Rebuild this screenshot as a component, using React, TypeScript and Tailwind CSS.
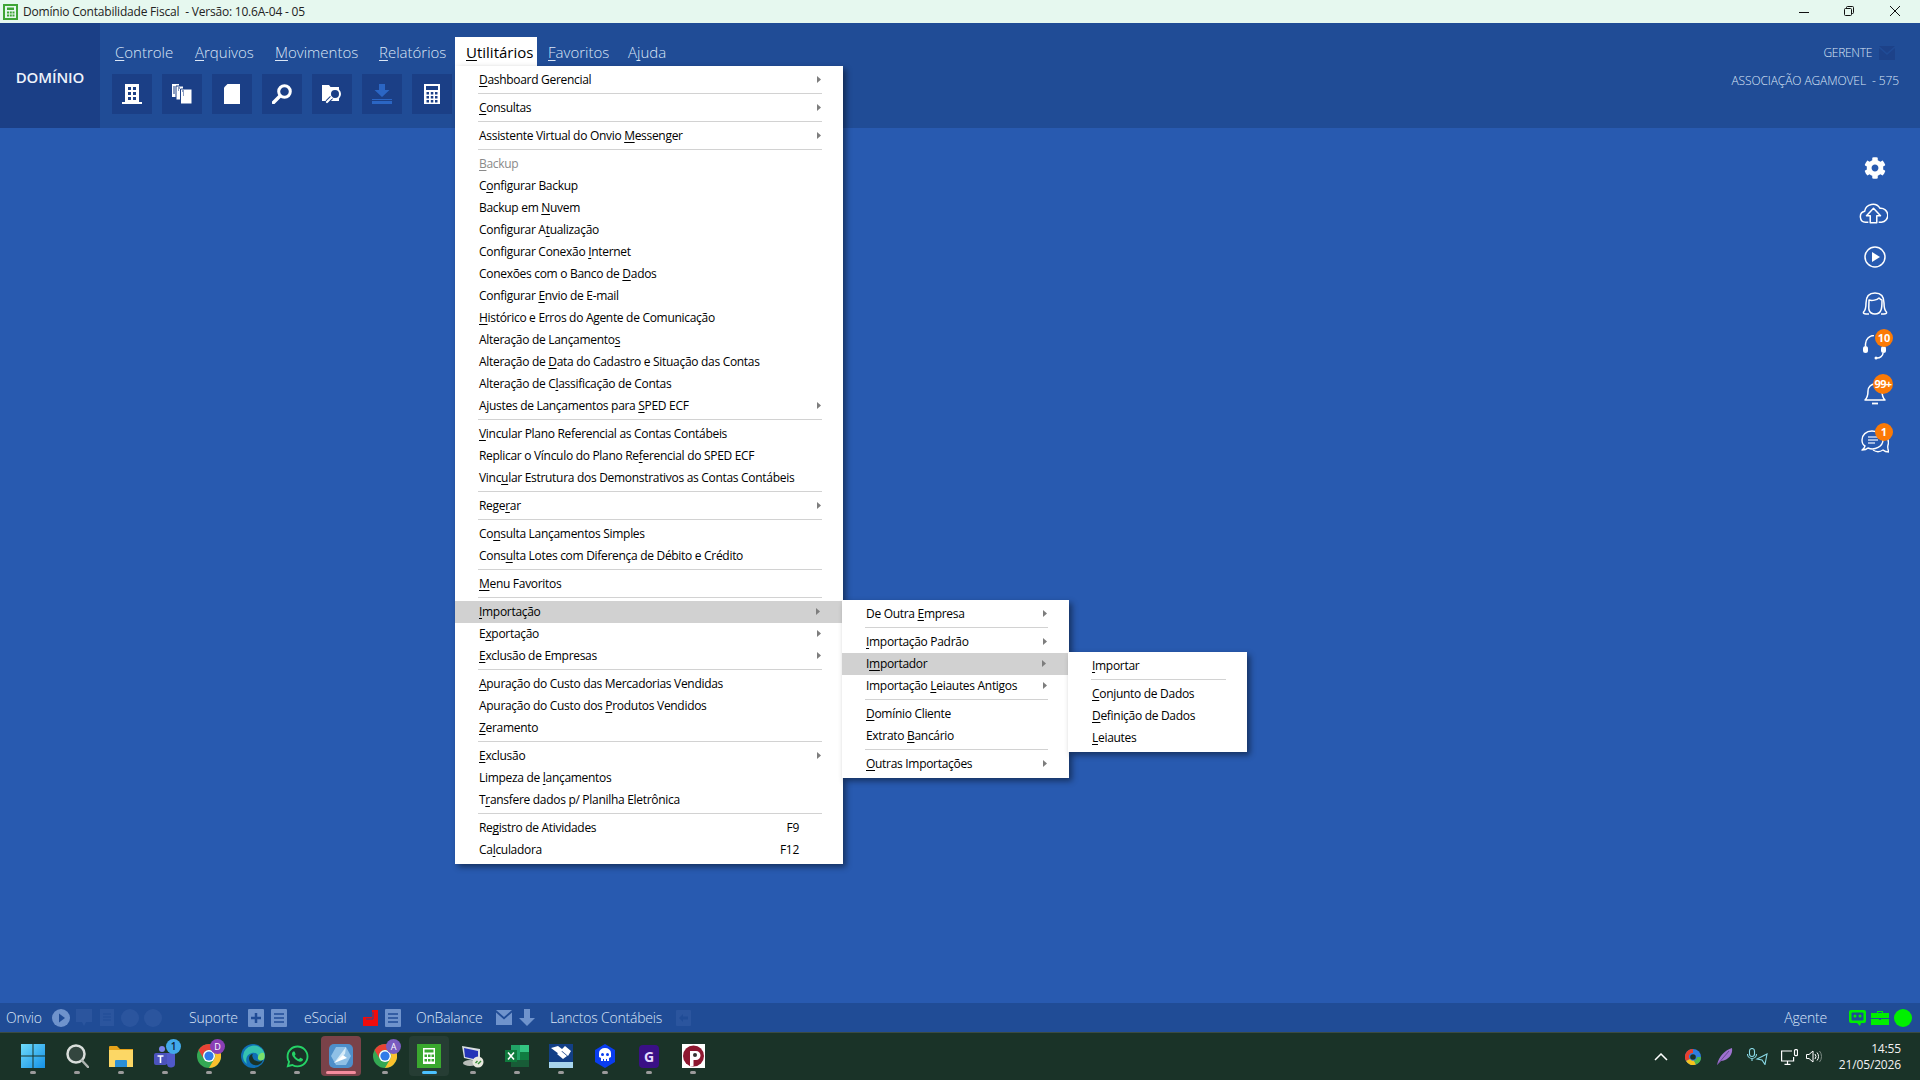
import React from "react";
import { FaCog, FaWhatsapp } from "react-icons/fa";

function Mn({ t }: { t: string }) {
  const i = t.indexOf("&");
  if (i < 0) return <span className="whitespace-pre">{t}</span>;
  return (
    <span className="whitespace-pre">
      {t.slice(0, i)}
      <u className="underline underline-offset-[2px] decoration-1 [text-decoration-skip-ink:none]">{t[i + 1]}</u>
      {t.slice(i + 2)}
    </span>
  );
}

type Row = { t?: string; arrow?: boolean; hi?: boolean; dis?: boolean; key?: string };

function Arrow() {
  return (
    <svg width="4" height="7" viewBox="0 0 4 7" className="shrink-0 -translate-y-px mr-[1px]">
      <path d="M0 0l4 3.500L0 7z" fill="#7d7d7d" />
    </svg>
  );
}

function MenuRows({ rows, pl, pr, sepL, hiR }: { rows: Row[]; pl: string; pr: string; sepL: string; hiR: string }) {
  return (
    <>
      {rows.map((r, i) =>
        r.t === undefined ? (
          <div key={i} className={`h-[6px] pt-[2px] ${sepL} ${pr}`}>
            <div className="h-px bg-[#d2d2d2]" />
          </div>
        ) : (
          <div
            key={i}
            className={`h-[22px] flex items-center justify-between ${pl} ${pr} ${r.hi ? `bg-[#d1d1d1] ${hiR}` : ""} ${r.dis ? "text-[#8a8a8a]" : "text-black"}`}
          >
            <Mn t={r.t} />
            {r.arrow && <Arrow />}
            {r.key && <span className="mr-[23px]">{r.key}</span>}
          </div>
        )
      )}
    </>
  );
}

const S: Row = {};
const mainRows: Row[] = [
  { t: "&Dashboard Gerencial", arrow: true }, S,
  { t: "&Consultas", arrow: true }, S,
  { t: "Assistente Virtual do Onvio &Messenger", arrow: true }, S,
  { t: "&Backup", dis: true },
  { t: "C&onfigurar Backup" },
  { t: "Backup em &Nuvem" },
  { t: "Configurar A&tualização" },
  { t: "Configurar Conexão &Internet" },
  { t: "Conexões com o Banco de &Dados" },
  { t: "Configurar &Envio de E-mail" },
  { t: "&Histórico e Erros do Agente de Comunicação" },
  { t: "Alteração de Lançamento&s" },
  { t: "Alteração de &Data do Cadastro e Situação das Contas" },
  { t: "Alteração de C&lassificação de Contas" },
  { t: "Ajustes de Lançamentos para &SPED ECF", arrow: true }, S,
  { t: "&Vincular Plano Referencial as Contas Contábeis" },
  { t: "Replicar o Vínculo do Plano Re&ferencial do SPED ECF" },
  { t: "Vinc&ular Estrutura dos Demonstrativos as Contas Contábeis" }, S,
  { t: "Rege&rar", arrow: true }, S,
  { t: "Co&nsulta Lançamentos Simples" },
  { t: "Cons&ulta Lotes com Diferença de Débito e Crédito" }, S,
  { t: "&Menu Favoritos" }, S,
  { t: "&Importação", arrow: true, hi: true },
  { t: "E&xportação", arrow: true },
  { t: "&Exclusão de Empresas", arrow: true }, S,
  { t: "&Apuração do Custo das Mercadorias Vendidas" },
  { t: "Apuração do Custo dos &Produtos Vendidos" },
  { t: "&Zeramento" }, S,
  { t: "&Exclusão", arrow: true },
  { t: "Limpeza de &lançamentos" },
  { t: "T&ransfere dados p/ Planilha Eletrônica" }, S,
  { t: "Re&gistro de Atividades", key: "F9" },
  { t: "Ca&lculadora", key: "F12" },
];
const sub1: Row[] = [
  { t: "De Outra &Empresa", arrow: true }, S,
  { t: "&Importação Padrão", arrow: true },
  { t: "I&mportador", arrow: true, hi: true },
  { t: "Importação &Leiautes Antigos", arrow: true }, S,
  { t: "&Domínio Cliente" },
  { t: "Extrato &Bancário" }, S,
  { t: "&Outras Importações", arrow: true },
];
const sub2: Row[] = [
  { t: "&Importar" }, S,
  { t: "&Conjunto de Dados" },
  { t: "&Definição de Dados" },
  { t: "&Leiautes" },
];

const TILE = "#1b3f86";

function Tool({ children }: { children: React.ReactNode }) {
  return <div className="w-10 h-10 bg-[#1b3f86] flex items-center justify-center">{children}</div>;
}

function TopMenu({ t, cls }: { t: string; cls: string }) {
  return <div className={`${cls} text-[#dbe6f6] text-[15px] font-light`}><Mn t={t} /></div>;
}

function Dot({ c }: { c?: string }) {
  return <div className={`mt-[3px] h-[3px] rounded-full ${c ?? "w-[6px] bg-[#9b9b9b]"}`} />;
}

function Task({ children, bg, bar }: { children: React.ReactNode; bg?: string; bar?: string }) {
  return (
    <div className="w-[44px] flex justify-center pt-[3px]">
      <div className={`w-[40px] h-[40px] rounded-[4px] pt-[8px] flex flex-col items-center ${bg ?? ""}`}>
        <div className="w-[26px] h-[24px] flex items-center justify-center">{children}</div>
        <Dot c={bar} />
      </div>
    </div>
  );
}

function Chrome() {
  return (
    <svg width="24" height="24" viewBox="0 0 24 24">
      <circle cx="12" cy="12" r="12" fill="#34a853" />
      <path d="M1.600 6A12 12 0 0 1 12 0a12 12 0 0 1 10.400 6H12a6 6 0 0 0-5.200 9z" fill="#e94235" />
      <path d="M22.400 6A12 12 0 0 1 12 24l5.200-9A6 6 0 0 0 16 7z" fill="#fbc02d" />
      <circle cx="12" cy="12" r="6" fill="#fff" />
      <circle cx="12" cy="12" r="4.600" fill="#2f7be8" />
    </svg>
  );
}

function Badge({ t, cls }: { t: string; cls: string }) {
  return (
    <div className={`absolute rounded-full bg-[#fb7a06] text-white font-bold flex items-center justify-center ${cls}`}>{t}</div>
  );
}

export default function App() {
  return (
    <div className="relative w-[1920px] h-[1080px] overflow-hidden flex flex-col bg-[#285ab0] font-['Open_Sans','Noto_Sans',sans-serif] text-[12px]">
      {/* title bar */}
      <div className="h-[23px] bg-[#e6f8ef] flex items-center pl-[3px] shrink-0">
        <svg width="15" height="16" viewBox="0 0 15 16" className="mr-[5px]">
          <rect width="15" height="16" fill="#3fa535" />
          <rect x="2" y="2" width="11" height="12" fill="#e6f8ef" />
          <rect x="4" y="3.500" width="7" height="2.500" fill="#3fa535" />
          <path d="M4 7.500h2v2H4zM6.800 7.500h2v2h-2zM9.500 7.500h2v2h-2zM4 10.500h2v2H4zM6.800 10.500h2v2h-2zM9.500 10.500h2v2h-2z" fill="#3fa535" />
        </svg>
        <span className="text-[#222] whitespace-pre tracking-[-0.2px]">Domínio Contabilidade Fiscal  - Versão: 10.6A-04 - 05</span>
        <div className="ml-auto flex items-center pr-[20px]">
          <svg width="10" height="10" viewBox="0 0 10 10" className="mr-[35px]"><path d="M0 5.500h10" stroke="#111" /></svg>
          <svg width="10" height="10" viewBox="0 0 10 10" className="mr-[36px] -translate-y-px">
            <rect x="0.500" y="2.500" width="7" height="7" rx="1" fill="none" stroke="#111" />
            <path d="M2.500 2.500V1.500a1 1 0 0 1 1-1h5a1 1 0 0 1 1 1v5a1 1 0 0 1-1 1h-1" fill="none" stroke="#111" />
          </svg>
          <svg width="10" height="10" viewBox="0 0 10 10" className="-translate-y-px"><path d="M0 0l10 10M10 0L0 10" stroke="#111" /></svg>
        </div>
      </div>

      {/* header */}
      <div className="h-[105px] bg-[#204c96] flex shrink-0">
        <div className="w-[100px] bg-[#1b3f86] flex items-center justify-center pt-[3px]">
          <span className="text-[#eef3fb] font-semibold text-[15px] tracking-[-0.1px]">DOMÍNIO</span>
        </div>
        <div className="flex flex-col">
          <div className="flex pl-[15px] pt-[14px] h-[43px]">
            <TopMenu t="&Controle" cls="w-[80px] pt-[4px]" />
            <TopMenu t="&Arquivos" cls="w-[80px] pt-[4px]" />
            <TopMenu t="&Movimentos" cls="w-[104px] pt-[4px]" />
            <TopMenu t="&Relatórios" cls="w-[76px] pt-[4px]" />
            <div className="w-[82px] h-[29px] bg-white pl-[11px] pt-[4px] text-[15px] text-black"><Mn t="&Utilitários" /></div>
            <TopMenu t="&Favoritos" cls="w-[91px] pl-[11px] pt-[4px]" />
            <TopMenu t="A&juda" cls="pt-[4px]" />
          </div>
          <div className="flex gap-[10px] pl-[12px] mt-[8px]">
            <Tool>
              <svg width="20" height="20" viewBox="0 0 20 20">
                <rect x="3" y="0" width="14" height="18" fill="#fff" />
                <rect x="0" y="18" width="20" height="2" fill="#fff" />
                <path d="M6 3h3v3H6zM11 3h3v3h-3zM6 8h3v3H6zM11 8h3v3h-3zM6 13h3v3H6zM11 13h3v3h-3z" fill={TILE} />
              </svg>
            </Tool>
            <Tool>
              <svg width="20" height="20" viewBox="0 0 20 20">
                <path d="M0 0h7v13H0z" fill="#fff" />
                <path d="M4 2h7.500v14H4z" fill="#fff" stroke={TILE} />
                <path d="M8.500 5H20v15H8.500z" fill="#fff" stroke={TILE} />
                <path d="M2 2v8M6 4h2M6 6h1M10 7h2M11 9h1M11 11h1" stroke={TILE} />
              </svg>
            </Tool>
            <Tool>
              <svg width="16" height="20" viewBox="0 0 16 20"><path d="M3.500 0H16v20H0V3.500z" fill="#fff" /></svg>
            </Tool>
            <Tool>
              <svg width="20" height="20" viewBox="0 0 20 20">
                <circle cx="12.500" cy="7.500" r="5.800" fill="none" stroke="#fff" strokeWidth="3" />
                <path d="M8 12L1.500 18.500" stroke="#fff" strokeWidth="3.500" strokeLinecap="round" />
              </svg>
            </Tool>
            <Tool>
              <svg width="20" height="20" viewBox="0 0 20 20">
                <path d="M0 1h7l1.500 2H17v14H0z" fill="#fff" />
                <circle cx="13" cy="10" r="5" fill={TILE} stroke="#fff" strokeWidth="2" />
                <path d="M9.500 13.500L5 18" stroke={TILE} strokeWidth="4" />
                <path d="M9.500 13.500L5 18" stroke="#fff" strokeWidth="2.200" strokeLinecap="round" />
              </svg>
            </Tool>
            <Tool>
              <svg width="20" height="20" viewBox="0 0 20 20">
                <path d="M7 0h6v6h4.500L10 13 2.500 6H7z" fill="#2b66c4" />
                <rect x="0" y="15" width="20" height="5" fill="#2b66c4" />
                <rect x="0" y="16" width="20" height="1" fill={TILE} />
              </svg>
            </Tool>
            <Tool>
              <svg width="16" height="20" viewBox="0 0 16 20">
                <rect width="16" height="20" fill="#fff" />
                <rect x="2" y="2" width="12" height="4" fill={TILE} />
                <path d="M2.500 8h2.500v2.500H2.500zM6.800 8h2.500v2.500H6.800zM11 8h2.500v2.500H11zM2.500 12h2.500v2.500H2.500zM6.800 12h2.500v2.500H6.800zM11 12h2.500v2.500H11zM2.500 16h2.500v2.500H2.500zM6.800 16h2.500v2.500H6.800zM11 16h2.500v2.500H11z" fill={TILE} />
              </svg>
            </Tool>
          </div>
        </div>
        <div className="ml-auto flex flex-col items-end pr-[21px] pt-[23px] text-[#dbe6f6] font-light">
          <div className="flex items-center h-[14px] tracking-[-0.3px]">
            <span>GERENTE</span>
            <svg width="16" height="14" viewBox="0 0 16 14" className="ml-[7px] mr-[4px]">
              <path d="M0 0h16L8 7z M0 2l8 7 8-7v12H0z" fill="#1d4289" />
            </svg>
          </div>
          <div className="mt-[12px] whitespace-pre tracking-[-0.1px]">ASSOCIAÇÃO AGAMOVEL  - 575</div>
        </div>
      </div>

      {/* main */}
      <div className="flex-1 flex justify-end pr-[29px] pt-[17px]">
        <div className="w-8 flex flex-col text-white">
          <div className="h-[46px] flex items-center justify-center"><FaCog size={22} color="#fff" /></div>
          <div className="h-[43px] flex items-center justify-center pr-[3px]">
            <svg width="31" height="23" viewBox="0 0 31 23" fill="none" stroke="#fff" strokeWidth="1.600" strokeLinejoin="round">
              <path d="M10 22H7a6 6 0 0 1-1-11.800A9 9 0 0 1 22.500 7 7.500 7.500 0 0 1 24 22h-3" />
              <path d="M15.500 7l-7.500 8h4v7.500h7V15h4z" />
            </svg>
          </div>
          <div className="h-[45px] flex items-center justify-center">
            <svg width="22" height="22" viewBox="0 0 22 22">
              <circle cx="11" cy="11" r="10" fill="none" stroke="#fff" strokeWidth="1.500" />
              <path d="M8 6l8 5-8 5z" fill="#fff" />
            </svg>
          </div>
          <div className="h-[48px] flex items-center justify-center pr-[1px]">
            <svg width="26" height="23" viewBox="0 0 26 23" fill="none" stroke="#fff" strokeWidth="1.500" strokeLinejoin="round">
              <path d="M7 22H4c-2 0-3-1-2.500-2 2-1.500 2.500-4 2.500-9C4 5 7 1 13 1s9 4 9 10c0 5 .5 7.500 2.500 9 .5 1-.5 2-2.500 2h-3" />
              <path d="M7 8c3 1 8 0 10-2 1 1 2 2 3 2 0 6 0 8-1 10-1 3-3 4-6 4s-5-1-6-4c-.5-3 0-6 0-10z" />
            </svg>
          </div>
          <div className="h-[40px] flex items-center justify-center relative">
            <svg width="26" height="25" viewBox="0 0 26 25" fill="none">
              <path d="M3.500 11V9a8.500 8.500 0 0 1 8.500-8.500" stroke="#fff" strokeWidth="1.500" />
              <rect x="1" y="11" width="5" height="7" rx="2.500" fill="#fff" />
              <rect x="19" y="11" width="5" height="7" rx="2.500" fill="#fff" />
              <path d="M21 18c0 3-3 5-6 5" stroke="#fff" strokeWidth="1.500" />
              <circle cx="14" cy="23" r="1.500" fill="#fff" />
            </svg>
            <Badge t="10" cls="w-[18px] h-[18px] left-[16px] top-[2px] text-[11px]" />
          </div>
          <div className="h-[50px] flex items-center justify-center relative">
            <svg width="24" height="25" viewBox="0 0 24 25" fill="none" stroke="#fff" strokeWidth="1.500" strokeLinejoin="round">
              <path d="M2 20c2-2 3-4 3-9a7 7 0 0 1 14 0c0 5 1 7 3 9z" />
              <path d="M9 23.500h6" strokeWidth="1.800" />
            </svg>
            <Badge t="99+" cls="w-[20px] h-[20px] left-[14px] top-[7px] text-[11px] tracking-[-0.6px]" />
          </div>
          <div className="h-[48px] flex items-center justify-center relative">
            <svg width="28" height="24" viewBox="0 0 28 24" fill="none" stroke="#fff" strokeWidth="1.400" strokeLinejoin="round">
              <path d="M25 8c2 2 3 5 2 8-.5 2-.5 4 1 7-3 0-5-1-6-2-3 2-7 2-10 0" />
              <path d="M11 2C5 2 1 6 1 11c0 3 1 5 3 6-.5 2-1.500 3-3 4 3 0 5-1 6-2 7 3 15-2 15-8 0-5-5-9-11-9z" />
              <path d="M7 8h10M7 11h10M7 14h7" stroke="#c7d6f0" strokeWidth="1.500" />
            </svg>
            <Badge t="1" cls="w-[18px] h-[18px] left-[16px] top-[6px] text-[11px]" />
          </div>
        </div>
      </div>

      {/* status bar */}
      <div className="h-[29px] bg-[#204c96] flex items-center shrink-0 text-[14px] font-light text-[#dbe6f6] tracking-[-0.2px]">
        <span className="ml-[6px] w-[46px]">Onvio</span>
        <svg width="18" height="18" viewBox="0 0 18 18"><circle cx="9" cy="9" r="9" fill="#6f93cc" /><path d="M7 4.500l6 4.500-6 4.500z" fill="#204c96" /></svg>
        <svg width="16" height="17" viewBox="0 0 16 17" className="ml-[6px]"><path d="M0 0h16v13h-6l-2 4-2-4H0z" fill="#2b559e" /></svg>
        <svg width="14" height="17" viewBox="0 0 14 17" className="ml-[8px]"><rect width="14" height="17" fill="#2b559e" /><path d="M3 5h8M3 8h8M3 11h8" stroke="#204c96" /></svg>
        <div className="ml-[7px] w-[18px] h-[18px] rounded-full bg-[#2b559e]" />
        <div className="ml-[5px] w-[18px] h-[18px] rounded-full bg-[#2b559e]" />
        <span className="ml-[27px] w-[59px]">Suporte</span>
        <svg width="16" height="18" viewBox="0 0 16 18"><rect width="16" height="18" rx="1" fill="#6f93cc" /><path d="M8 4v10M3 9h10" stroke="#204c96" strokeWidth="2.500" /></svg>
        <svg width="16" height="18" viewBox="0 0 16 18" className="ml-[7px]"><rect width="16" height="18" rx="1" fill="#6f93cc" /><path d="M3 5h10M3 9h10M3 13h10" stroke="#204c96" strokeWidth="1.500" /></svg>
        <span className="ml-[17px] w-[59px]">eSocial</span>
        <svg width="15" height="16" viewBox="0 0 15 16"><path d="M9 0h6v16H0V7h9z" fill="#f10b0b" /><path d="M5 6V3h2M3 9h7V2" stroke="#204c96" fill="none" /></svg>
        <svg width="16" height="18" viewBox="0 0 16 18" className="ml-[7px]"><rect width="16" height="18" rx="1" fill="#6f93cc" /><path d="M3 5h10M3 9h10M3 13h10" stroke="#204c96" strokeWidth="1.500" /></svg>
        <span className="ml-[15px] w-[80px]">OnBalance</span>
        <svg width="16" height="15" viewBox="0 0 16 15"><path d="M0 0h16L8 7z M0 2.500l8 7 8-7V15H0z" fill="#6f93cc" /></svg>
        <svg width="16" height="17" viewBox="0 0 16 17" className="ml-[7px]"><path d="M5 0h6v9h5l-8 8-8-8h5z" fill="#6f93cc" /></svg>
        <span className="ml-[15px] w-[126px]">Lanctos Contábeis</span>
        <svg width="15" height="16" viewBox="0 0 15 16"><rect width="15" height="16" rx="1" fill="#2b559e" /><path d="M3 8l4-4v2.500h5v3H7V12z" fill="#204c96" /></svg>
        <span className="ml-auto">Agente</span>
        <svg width="17" height="17" viewBox="0 0 17 17" className="ml-[22px]"><path d="M2 1h13a2 2 0 0 1 2 2v9a2 2 0 0 1-2 2h-3l-1 3-3-3H2a2 2 0 0 1-2-2V3a2 2 0 0 1 2-2z" fill="#00ee00" /><rect x="2.500" y="3.500" width="12" height="8" rx="1" fill="#204c96" /><circle cx="6" cy="7" r="1.500" fill="#00ee00" /><circle cx="11" cy="7" r="1.500" fill="#00ee00" /></svg>
        <svg width="18" height="15" viewBox="0 0 18 15" className="ml-[5px]"><path d="M6 3V1h6v2h6v5H0V3zM7 2v1h4V2zM0 9h8v1h2V9h8v6H0z" fill="#00ee00" fillRule="evenodd" /></svg>
        <div className="ml-[5px] mr-[8px] w-[18px] h-[18px] rounded-full bg-[#00f000]" />
      </div>

      {/* taskbar */}
      <div className="h-[48px] bg-[#1a3328] border-t border-[#3a4b42] flex shrink-0 pl-[11px]">
        <Task>
          <svg width="24" height="24" viewBox="0 0 24 24">
            <defs><linearGradient id="w" x1="0" y1="0" x2="1" y2="1"><stop offset="0" stopColor="#6fdcfb" /><stop offset="1" stopColor="#1490e6" /></linearGradient></defs>
            <path d="M0 0h11.500v11.500H0zM12.500 0H24v11.500H12.500zM0 12.500h11.500V24H0zM12.500 12.500H24V24H12.500z" fill="url(#w)" />
          </svg>
        </Task>
        <Task>
          <svg width="23" height="24" viewBox="0 0 23 24">
            <circle cx="10" cy="10" r="8.500" fill="#33463f" stroke="#d9dedb" strokeWidth="2.500" />
            <path d="M16 16.500l6 6.500" stroke="#aeb5b1" strokeWidth="2.500" strokeLinecap="round" />
          </svg>
        </Task>
        <Task>
          <svg width="24" height="22" viewBox="0 0 24 22">
            <path d="M0 2a1 1 0 0 1 1-1h7l3 3h13v4H0z" fill="#e5a21a" />
            <path d="M0 5h24v17H0z" fill="#fcd765" />
            <path d="M7 15h10a1 1 0 0 1 1 1v6H6v-6a1 1 0 0 1 1-1z" fill="#2b8fd6" />
          </svg>
        </Task>
        <Task>
          <div className="relative w-[24px] h-[24px]">
            <svg width="24" height="24" viewBox="0 0 24 24">
              <circle cx="9" cy="5" r="3" fill="#7b83eb" />
              <path d="M11 9h11v10a4 4 0 0 1-8 1h-3z" fill="#5059c9" />
              <rect x="1" y="9" width="13" height="12" rx="2" fill="#4b53bc" />
              <path d="M4.500 12h6M7.500 12v7" stroke="#fff" strokeWidth="1.600" />
            </svg>
            <div className="absolute -top-[5px] left-[13px] w-[15px] h-[15px] rounded-full bg-[#42a9ea] text-[#10243a] text-[10px] font-semibold flex items-center justify-center">1</div>
          </div>
        </Task>
        <Task>
          <div className="relative">
            <Chrome />
            <div className="absolute -top-[5px] left-[13px] w-[15px] h-[15px] rounded-full bg-[#8a3fb5] text-white text-[9px] flex items-center justify-center">D</div>
          </div>
        </Task>
        <Task>
          <svg width="24" height="24" viewBox="0 0 24 24">
            <circle cx="12" cy="12" r="12" fill="#0f6fb5" />
            <path d="M2 12A11 11 0 0 1 23 8c1 3 1 6-1 7-3 1-6 0-5-3 0-2-3-4-6-3-5 1-7 6-5 11C3 18 2 15 2 12z" fill="#35c1b0" />
            <path d="M23 9c1 3 1 6-1 7-3 1-6 0-5-3 1-3 3-5 6-4z" fill="#7be06a" />
            <path d="M8 14c0 5 4 8 9 7 3-1 4-3 5-5-4 3-9 1-10-2-1-2-1-3 0-4-2 0-4 2-4 4z" fill="#1a3328" />
          </svg>
        </Task>
        <Task><FaWhatsapp size={25} color="#25d366" /></Task>
        <Task bg="bg-[#7a4249]" bar="w-[30px] bg-[#f58c9e]">
          <svg width="24" height="24" viewBox="0 0 24 24">
            <rect width="24" height="24" rx="5" fill="#4e8fca" />
            <path d="M7 3h10l5 9-5 9H7l-5-9z" fill="#8fc0e6" />
            <path d="M5 19l11-9 1-7z" fill="#d6ebf8" />
            <path d="M5 19l13-5-4-3z" fill="#fff" />
          </svg>
        </Task>
        <Task>
          <div className="relative">
            <Chrome />
            <div className="absolute -top-[5px] left-[13px] w-[15px] h-[15px] rounded-full bg-[#7a5cc0] text-white text-[9px] flex items-center justify-center">A</div>
          </div>
        </Task>
        <Task bg="bg-[#263d34]" bar="w-[15px] bg-[#4cc2ff]">
          <svg width="24" height="24" viewBox="0 0 24 24">
            <rect width="24" height="24" fill="#3aa82f" />
            <rect x="6" y="4" width="12" height="16" fill="#fff" />
            <rect x="7.500" y="5.500" width="9" height="3" fill="#3aa82f" />
            <path d="M7.500 10.500h2.500V13H7.500zM11 10.500h2.500V13H11zM14.500 10.500H17V13h-2.500zM7.500 15h2.500v2.500H7.500zM11 15h2.500v2.500H11zM14.500 15H17v2.500h-2.500z" fill="#3aa82f" />
          </svg>
        </Task>
        <Task>
          <svg width="24" height="24" viewBox="0 0 24 24">
            <path d="M1 2l18 3v13L3 14z" fill="#d8dde0" />
            <path d="M3 4l14 3v9L4 13z" fill="#2433b8" />
            <ellipse cx="9" cy="19" rx="7" ry="3" fill="#b9bdb9" />
            <circle cx="17" cy="18" r="5.500" fill="#e8e8df" />
            <path d="M14.500 19l2-2M17 20l3-3" stroke="#3a8f3a" strokeWidth="1.400" />
          </svg>
        </Task>
        <Task>
          <svg width="24" height="24" viewBox="0 0 24 24">
            <path d="M6 1h18v22H6z" fill="#21a366" />
            <path d="M15 1h9v7h-9z" fill="#33c481" />
            <path d="M6 16h18v7H6z" fill="#185c37" />
            <path d="M15 8h9v8h-9z" fill="#107c41" />
            <rect x="0" y="6" width="12" height="12" fill="#0f7a3c" />
            <path d="M3 8.500l6 7M9 8.500l-6 7" stroke="#fff" strokeWidth="1.600" />
          </svg>
        </Task>
        <Task>
          <svg width="24" height="24" viewBox="0 0 24 24">
            <rect width="24" height="24" fill="#a8d6ee" />
            <rect y="0" width="24" height="18" fill="#123f86" />
            <path d="M2 4l8 6 3-3 6 5 3-5-6-5-3 3-4-3z" fill="#fff" />
            <path d="M8 10l6 5 4-3-6-5z" fill="#fff" />
          </svg>
        </Task>
        <Task>
          <svg width="20" height="24" viewBox="0 0 20 24">
            <path d="M10 0l10 6v12l-10 6-10-6V6z" fill="#0a3df0" />
            <path d="M4 9a6 5 0 0 1 12 0v4l-2 1v3h-2v-2h-1v2H9v-2H8v2H6v-3l-2-1z" fill="#fff" />
            <circle cx="7.500" cy="10.500" r="1.500" fill="#0a3df0" />
            <circle cx="12.500" cy="10.500" r="1.500" fill="#0a3df0" />
          </svg>
        </Task>
        <Task>
          <div className="w-[20px] h-[23px] rounded-[4px] bg-[#3a1086] text-[#e6dcff] font-bold text-[14px] flex items-center justify-center">G</div>
        </Task>
        <Task>
          <svg width="23" height="24" viewBox="0 0 23 24">
            <rect width="23" height="24" fill="#fff" />
            <circle cx="11.500" cy="12" r="10.500" fill="#8e1730" />
            <path d="M8 22V7h6a4.500 4.500 0 0 1 0 9h-2.500v6z" fill="#fff" />
            <circle cx="13" cy="11" r="2" fill="#333" />
          </svg>
        </Task>

        <div className="ml-auto flex items-center text-white pr-[19px]">
          <svg width="14" height="8" viewBox="0 0 14 8"><path d="M1 7l6-6 6 6" fill="none" stroke="#fff" strokeWidth="1.500" /></svg>
          <svg width="16" height="16" viewBox="0 0 16 16" className="ml-[17px]">
            <circle cx="8" cy="8" r="8" fill="#2f7de0" />
            <path d="M8 0a8 8 0 0 0-7 12l4-2a3.500 3.500 0 0 1 3-6z" fill="#e8402f" />
            <path d="M1 12a8 8 0 0 0 10 3.500l-2-4A3.500 3.500 0 0 1 5 10z" fill="#f7c31c" />
            <path d="M11 15.500A8 8 0 0 0 16 8h-4a3.500 3.500 0 0 1-3 3.500z" fill="#4fb648" />
            <circle cx="8" cy="8" r="2.800" fill="#1a3328" />
          </svg>
          <svg width="16" height="17" viewBox="0 0 16 17" className="ml-[16px]">
            <path d="M0 17C2 8 8 2 15 0c1 6-3 12-11 13z" fill="#9e72cf" />
            <path d="M0 17L12 3" stroke="#5d3f85" strokeWidth="0.800" />
          </svg>
          <svg width="21" height="17" viewBox="0 0 21 17" className="ml-[14px]" fill="none" stroke="#8bdbe8" strokeWidth="1.100">
            <rect x="2.500" y="0.500" width="5" height="8" rx="2.500" />
            <path d="M0.500 6a4.500 4.500 0 0 0 9 0M5 10.500v2.500" />
            <path d="M20 6l-10 5 5 1 3 4.500z" />
          </svg>
          <svg width="17" height="16" viewBox="0 0 17 16" className="ml-[13px]" fill="none" stroke="#fff" strokeWidth="1.200">
            <path d="M11 2H0.600v10h12V8M6.500 12v3M3.500 15.400h6" />
            <rect x="13.500" y="0.600" width="3" height="6" rx="1" />
          </svg>
          <svg width="16" height="13" viewBox="0 0 16 13" className="ml-[8px]" fill="none" stroke="#fff" strokeWidth="1">
            <path d="M0.500 4.500h2.500L7 1v11L3 8.500H0.500z" />
            <path d="M9 4a4 4 0 0 1 0 5M11 2.500a6 6 0 0 1 0 8" />
            <path d="M13.500 1a8.500 8.500 0 0 1 0 11" stroke="#7d8a84" />
          </svg>
          <div className="ml-[15px] w-[64px] text-right text-[12px] leading-[16px] text-[#f2f2f2] tracking-[-0.15px]">
            <div>14:55</div>
            <div>21/05/2026</div>
          </div>
        </div>
      </div>

      {/* menus */}
      <div className="absolute left-[455px] top-[66px] w-[388px] py-[3px] bg-white shadow-[3px_3px_6px_rgba(0,0,0,0.45)] tracking-[-0.3px]">
        <MenuRows rows={mainRows} pl="pl-[24px]" pr="pr-[21px]" sepL="pl-[23px]" hiR="mr-[1px]" />
      </div>
      <div className="absolute left-[842px] top-[600px] w-[227px] py-[3px] bg-white shadow-[3px_3px_6px_rgba(0,0,0,0.45)] tracking-[-0.3px]">
        <MenuRows rows={sub1} pl="pl-[24px]" pr="pr-[21px]" sepL="pl-[23px]" hiR="mr-[1px]" />
      </div>
      <div className="absolute left-[1068px] top-[652px] w-[179px] py-[3px] bg-white shadow-[3px_3px_6px_rgba(0,0,0,0.45)] tracking-[-0.3px]">
        <MenuRows rows={sub2} pl="pl-[24px]" pr="pr-[21px]" sepL="pl-[23px]" hiR="" />
      </div>
    </div>
  );
}
